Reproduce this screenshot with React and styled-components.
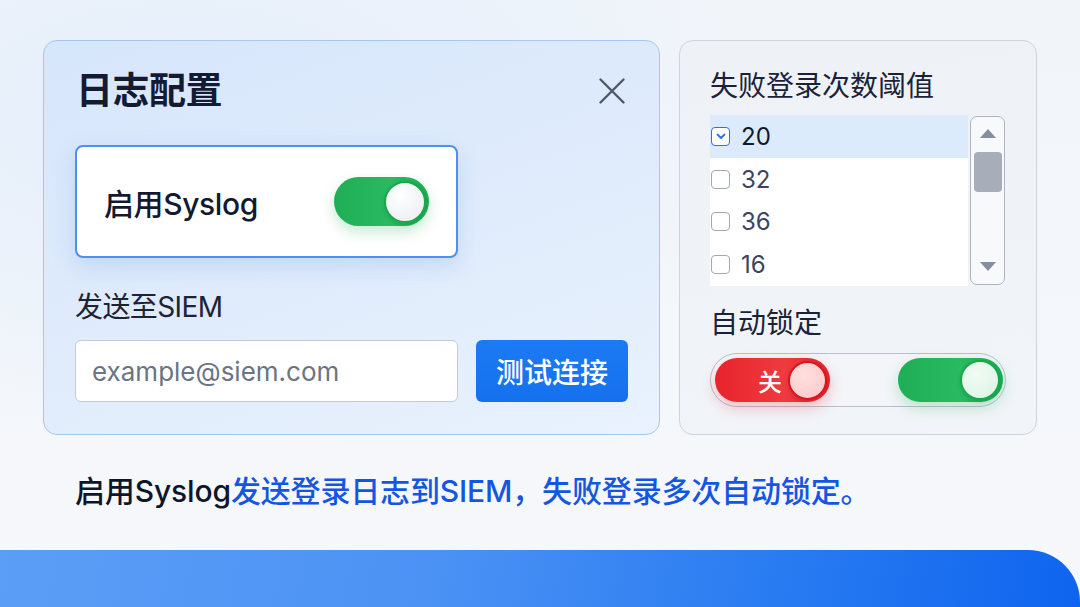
import React from "react";
import styled, { createGlobalStyle } from "styled-components";

const GlobalStyle = createGlobalStyle`
  html, body {
    margin: 0;
    padding: 0;
    height: 100%;
  }
  body {
    font-family: "Inter", "Noto Sans CJK SC", "Noto Sans", sans-serif;
    background: #f4f7fb;
    overflow: hidden;
  }
  #root {
    height: 100%;
  }
`;

const Page = styled.div`
  height: 607px;
  display: flex;
  flex-direction: column;
  background:
    radial-gradient(ellipse 600px 320px at 180px 120px, #e4eefb 0%, rgba(228, 238, 251, 0) 100%),
    linear-gradient(180deg, #f1f5fa 0%, #f6f8fb 100%);
`;

const Content = styled.div`
  padding: 40px 0 0 43px;
`;

const Cards = styled.div`
  display: flex;
  gap: 19px;
  align-items: stretch;
`;

const ConfigCard = styled.section`
  box-sizing: border-box;
  width: 617px;
  height: 395px;
  padding: 30px 31px 32px 31px;
  border: 1px solid #a6c7f1;
  border-radius: 14px;
  background: linear-gradient(160deg, #d6e6fb 0%, #e0ecfc 55%, #e9f2fd 100%);
  display: flex;
  flex-direction: column;
`;

const TitleRow = styled.div`
  display: flex;
  align-items: center;
  justify-content: space-between;
  height: 40px;
`;

const Title = styled.h1`
  margin: 0 0 0 1px;
  font-size: 37px;
  line-height: 40px;
  font-weight: 700;
  color: #131a32;
  letter-spacing: -0.5px;
`;

const CloseButton = styled.button`
  border: none;
  background: none;
  padding: 0;
  margin-right: 2px;
  width: 28px;
  height: 28px;
  display: flex;
  align-items: center;
  justify-content: center;
  cursor: pointer;
`;

const SyslogCard = styled.div`
  box-sizing: border-box;
  margin-top: 34px;
  width: 383px;
  height: 113px;
  padding: 0 27px 0 27px;
  background: #ffffff;
  border: 2px solid #4d8ff2;
  border-radius: 8px;
  box-shadow: 0 8px 22px rgba(90, 140, 220, 0.22);
  display: flex;
  align-items: center;
  justify-content: space-between;
`;

const SyslogLabel = styled.span`
  font-size: 30px;
  font-weight: 500;
  color: #141a2e;
  letter-spacing: -0.4px;
`;

const Toggle = styled.div`
  box-sizing: border-box;
  position: relative;
  width: ${(p) => p.$w}px;
  height: ${(p) => p.$h}px;
  border-radius: ${(p) => p.$h / 2}px;
  background: ${(p) =>
    p.$tone === "red"
      ? "linear-gradient(90deg, #e8232b 0%, #ee3b40 60%, #e5222a 100%)"
      : "linear-gradient(90deg, #1fae55 0%, #29ba62 60%, #1aae50 100%)"};
  box-shadow: ${(p) =>
    p.$tone === "red"
      ? "0 6px 14px rgba(232, 35, 43, 0.25)"
      : "0 6px 14px rgba(31, 174, 85, 0.25)"};
  display: flex;
  align-items: center;
  justify-content: flex-end;
  padding-right: 3px;
`;

const Knob = styled.div`
  box-sizing: border-box;
  width: ${(p) => p.$size}px;
  height: ${(p) => p.$size}px;
  border-radius: 50%;
  border: 2px solid ${(p) => (p.$tone === "red" ? "#e0121c" : "#17a84c")};
  background: ${(p) =>
    p.$tone === "red"
      ? "radial-gradient(circle at 40% 35%, #ffe0e0 0%, #fbc6c6 100%)"
      : p.$tone === "mint"
      ? "radial-gradient(circle at 40% 35%, #f2fbf4 0%, #d9f3e1 100%)"
      : "radial-gradient(circle at 40% 35%, #ffffff 0%, #e9ebef 100%)"};
  box-shadow: 0 2px 4px rgba(0, 0, 0, 0.12);
`;

const ToggleText = styled.span`
  color: #ffffff;
  font-size: 24px;
  font-weight: 500;
  margin-right: 6px;
`;

const FieldLabel = styled.div`
  margin-top: 32px;
  font-size: 28px;
  line-height: 34px;
  color: #1d2333;
  letter-spacing: -0.6px;
`;

const FieldRow = styled.div`
  margin-top: 16px;
  display: flex;
  gap: 18px;
`;

const Input = styled.input`
  box-sizing: border-box;
  width: 383px;
  height: 62px;
  padding: 0 16px;
  border: 1px solid #c5cad3;
  border-radius: 6px;
  background: #ffffff;
  font-family: "Inter", "Noto Sans CJK SC", sans-serif;
  font-size: 26px;
  color: #1d2333;
  outline: none;

  &::placeholder {
    color: #6b7384;
  }
`;

const PrimaryButton = styled.button`
  box-sizing: border-box;
  width: 153px;
  height: 62px;
  border: none;
  border-radius: 6px;
  background: linear-gradient(180deg, #1b7bf3 0%, #1670ee 100%);
  color: #ffffff;
  font-family: "Noto Sans CJK SC", sans-serif;
  font-size: 28px;
  font-weight: 500;
  cursor: pointer;
`;

const SideCard = styled.section`
  box-sizing: border-box;
  width: 358px;
  height: 395px;
  padding: 28px 31px 0 30px;
  border: 1px solid #cfd4dc;
  border-radius: 14px;
  background: linear-gradient(170deg, #eef2f7 0%, #f1f4f8 100%);
  display: flex;
  flex-direction: column;
`;

const SideLabel = styled.div`
  font-size: 28px;
  line-height: 34px;
  color: #1b2236;
  margin-top: ${(p) => p.$mt || 0}px;
`;

const ListBox = styled.div`
  margin-top: 12px;
  display: flex;
  gap: 2px;
  height: 171px;
`;

const List = styled.div`
  flex: 1;
  background: #ffffff;
  display: flex;
  flex-direction: column;
`;

const Row = styled.div`
  height: 42.75px;
  display: flex;
  align-items: center;
  gap: 11px;
  padding-left: 1px;
  background: ${(p) => (p.$active ? "#dcebfc" : "transparent")};
`;

const Box = styled.span`
  box-sizing: border-box;
  width: 19px;
  height: 19px;
  border-radius: 4px;
  border: 1.5px solid ${(p) => (p.$checked ? "#2d6fec" : "#a0a8b8")};
  background: #ffffff;
  display: flex;
  align-items: center;
  justify-content: center;
`;

const Num = styled.span`
  font-size: 24px;
  color: ${(p) => (p.$active ? "#111827" : "#3a4560")};
`;

const Scrollbar = styled.div`
  box-sizing: border-box;
  width: 35px;
  margin: 1px 0;
  border: 1px solid #adb4c2;
  border-radius: 7px;
  background: #f8f9fb;
  display: flex;
  flex-direction: column;
  align-items: center;
  padding: 12px 0 13px;
`;

const Arrow = styled.div`
  width: 0;
  height: 0;
  border-left: 8px solid transparent;
  border-right: 8px solid transparent;
  ${(p) =>
    p.$down
      ? "border-top: 9px solid #868e9e; margin-top: auto;"
      : "border-bottom: 9px solid #868e9e;"}
`;

const Thumb = styled.div`
  margin-top: 14px;
  width: 28px;
  height: 40px;
  border-radius: 4px;
  background: #a7adb9;
`;

const LockTrack = styled.div`
  box-sizing: border-box;
  margin-top: 13px;
  width: 296px;
  height: 54px;
  padding: 0 2px 0 4px;
  border: 1px solid #b9bfcc;
  border-radius: 27px;
  background: #f3f5f8;
  display: flex;
  align-items: center;
  justify-content: space-between;
`;

const Caption = styled.p`
  margin: 38px 0 0 32px;
  font-size: 30px;
  line-height: 36px;
  font-weight: 500;
  color: #0f1629;
  letter-spacing: -0.15px;
`;

const Accent = styled.span`
  color: #1456e2;
`;

const Band = styled.div`
  margin-top: auto;
  height: 57px;
  border-top-right-radius: 52px;
  background: linear-gradient(100deg, #5b9ef6 0%, #4b92f4 40%, #2679f1 75%, #0e64ee 100%);
`;

const options = [
  { value: 20, checked: true },
  { value: 32 },
  { value: 36 },
  { value: 16 },
];

export default function App() {
  return (
    <>
      <GlobalStyle />
      <Page>
        <Content>
          <Cards>
            <ConfigCard>
              <TitleRow>
                <Title>日志配置</Title>
                <CloseButton aria-label="关闭">
                  <svg width="28" height="28" viewBox="0 0 28 28">
                    <path
                      d="M2.5 2.5 L25.5 25.5 M25.5 2.5 L2.5 25.5"
                      stroke="#4f596c"
                      strokeWidth="2.4"
                      strokeLinecap="round"
                    />
                  </svg>
                </CloseButton>
              </TitleRow>
              <SyslogCard>
                <SyslogLabel>启用Syslog</SyslogLabel>
                <Toggle $w={95} $h={49} $tone="green">
                  <Knob $size={42} $tone="white" />
                </Toggle>
              </SyslogCard>
              <FieldLabel>发送至SIEM</FieldLabel>
              <FieldRow>
                <Input placeholder="example@siem.com" />
                <PrimaryButton>测试连接</PrimaryButton>
              </FieldRow>
            </ConfigCard>

            <SideCard>
              <SideLabel>失败登录次数阈值</SideLabel>
              <ListBox>
                <List>
                  {options.map(({ value, checked }) => (
                    <Row key={value} $active={checked}>
                      <Box $checked={checked}>
                        {checked && (
                          <svg width="10" height="7" viewBox="0 0 10 7">
                            <path
                              d="M1.5 1.5 L5 5 L8.5 1.5"
                              fill="none"
                              stroke="#2d6fec"
                              strokeWidth="1.8"
                              strokeLinecap="round"
                              strokeLinejoin="round"
                            />
                          </svg>
                        )}
                      </Box>
                      <Num $active={checked}>{value}</Num>
                    </Row>
                  ))}
                </List>
                <Scrollbar>
                  <Arrow />
                  <Thumb />
                  <Arrow $down />
                </Scrollbar>
              </ListBox>
              <SideLabel $mt={20}>自动锁定</SideLabel>
              <LockTrack>
                <Toggle $w={115} $h={44} $tone="red">
                  <ToggleText>关</ToggleText>
                  <Knob $size={39} $tone="red" />
                </Toggle>
                <Toggle $w={105} $h={44} $tone="green">
                  <Knob $size={40} $tone="mint" />
                </Toggle>
              </LockTrack>
            </SideCard>
          </Cards>
          <Caption>
            启用Syslog<Accent>发送登录日志到SIEM，失败登录多次自动锁定。</Accent>
          </Caption>
        </Content>
        <Band />
      </Page>
    </>
  );
}
